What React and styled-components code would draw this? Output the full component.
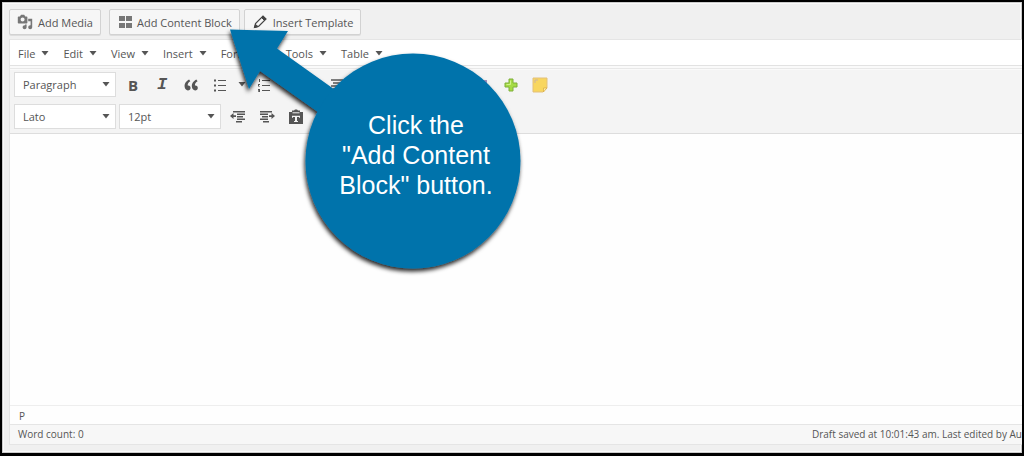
import React from "react";
import styled, { createGlobalStyle } from "styled-components";

const GlobalStyle = createGlobalStyle`
  * {
    box-sizing: border-box;
  }

  body {
    margin: 0;
    font-family: "Open Sans", "Noto Sans", sans-serif;
    font-size: 11px;
    color: #555;
  }

  button, select {
    font: inherit;
    color: inherit;
  }
`;

const Page = styled.main`
  position: relative;
  display: flex;
  flex-direction: column;
  min-height: 100vh;
  padding: 7px 0 8px 7px;
  overflow: hidden;
  background-color: #f0f0f0;
  border: 2px solid #000;
  border-bottom-width: 3px;
  box-shadow: inset 0 0 0 1px #ccc, inset 0 0 0 2px #fafafa;
`;

const MediaBar = styled.div`
  display: flex;
  gap: 4px;
  padding-bottom: 4px;
`;

const MediaButton = styled.button`
  display: flex;
  align-items: center;
  gap: ${(props) => props.$gap || 5}px;
  height: 26px;
  padding: 0 7px;
  margin-right: ${(props) => (props.$spaced ? "4px" : "0")};
  background-color: #f6f6f6;
  border: 1px solid #d2d2d2;
  border-radius: 2px;
  box-shadow: 0 1px 0 #ddd;
  white-space: nowrap;
  cursor: pointer;

  svg {
    color: #777;
  }
`;

const Editor = styled.section`
  flex: 1;
  display: flex;
  flex-direction: column;
  background-color: #fefefe;
  border-left: 1px solid #e5e5e5;
  border-top: 1px solid #e5e5e5;
`;

const MenuBar = styled.nav`
  display: flex;
  gap: 14px;
  height: 26px;
  padding: 1px 0 0 8px;
  background-color: #fff;
  border-bottom: 1px solid #e2e2e2;
`;

const MenuButton = styled.button`
  display: flex;
  align-items: center;
  gap: 6px;
  padding: 0;
  background: none;
  border: none;
  cursor: pointer;
`;

const Toolbar = styled.div`
  display: flex;
  flex-direction: column;
  gap: 7px;
  padding: 5px 4px 4px;
  background-color: #f4f4f4;
  border-top: 1px solid #fafafa;
  border-bottom: 1px solid #ddd;
  box-shadow: inset 0 1px 0 #fafafa, inset 0 2px 0 #e8e8e8, inset 0 3px 0 #fafafa;
`;

const ToolbarRow = styled.div`
  display: flex;
  align-items: center;
  gap: 1px;
  height: 25px;
`;

const SelectBox = styled.label`
  display: grid;
  align-items: center;
  width: 102px;
  height: 25px;
  margin-right: 2px;
  background-color: #fff;
  border: 1px solid #ddd;

  select, svg {
    grid-area: 1 / 1;
  }

  select {
    width: 100%;
    height: 23px;
    padding: 0 8px;
    appearance: none;
    background: none;
    border: none;
    outline: none;
  }

  svg {
    justify-self: end;
    margin-right: 5px;
    pointer-events: none;
  }
`;

const ToolButton = styled.button`
  display: flex;
  align-items: center;
  justify-content: center;
  width: ${(props) => (props.$narrow ? "14px" : "28px")};
  height: 25px;
  padding: 0;
  background: none;
  border: none;
  color: #555;
  cursor: pointer;
`;

const BoldMark = styled.b`
  font-size: 15px;
  line-height: 20px;
`;

const ItalicMark = styled.i`
  font-family: "Liberation Mono", monospace;
  font-size: 17px;
  font-weight: bold;
  line-height: 20px;
`;

const Content = styled.div`
  flex: 1;
  outline: none;
`;

const PathBar = styled.div`
  height: 19px;
  padding-left: 9px;
  border-top: 1px solid #eee;
  font-size: 10px;
  line-height: 20px;
`;

const StatusBar = styled.footer`
  display: flex;
  justify-content: space-between;
  height: 21px;
  padding-left: 8px;
  background-color: #f7f7f7;
  border-top: 1px solid #e5e5e5;
  border-bottom: 1px solid #e5e5e5;
  font-size: 10px;
  line-height: 18px;
  white-space: nowrap;
`;

const Callout = styled.aside`
  position: absolute;
  top: 17px;
  left: 218px;
  width: 320px;
  height: 270px;

  svg {
    display: block;
    overflow: visible;
  }
`;

const CalloutText = styled.p`
  position: absolute;
  top: 91px;
  left: 96px;
  width: 200px;
  margin: 0;
  color: #fff;
  font-family: "Liberation Sans", Arial, sans-serif;
  font-size: 25px;
  line-height: 30px;
  text-align: center;
`;

const Caret = () => (
  <svg width="8" height="5" viewBox="0 0 8 5" fill="#555" aria-hidden="true">
    <path d="M.5 0h7L4 4.500z" />
  </svg>
);

const MediaIcon = () => (
  <svg width="16" height="16" viewBox="0 0 20 20" fill="currentColor" aria-hidden="true">
    <path d="M13 11V4c0-.55-.45-1-1-1h-1.67L9 1H5L3.67 3H2c-.55 0-1 .45-1 1v7c0 .55.45 1 1 1h10c.55 0 1-.45 1-1zM7 4.5c1.38 0 2.5 1.12 2.5 2.5S8.38 9.5 7 9.5 4.5 8.38 4.5 7 5.62 4.5 7 4.5zM14 6h5v10.5c0 1.38-1.12 2.5-2.5 2.5S14 17.88 14 16.5s1.12-2.5 2.5-2.5c.17 0 .34.02.5.05V9h-3V6zm-4 8.05V13h2v3.5c0 1.38-1.12 2.5-2.5 2.5S7 17.88 7 16.5 8.12 14 9.5 14c.17 0 .34.02.5.05z" />
  </svg>
);

const BlocksIcon = () => (
  <svg width="16" height="16" viewBox="0 0 16 16" fill="currentColor" aria-hidden="true">
    <path d="M2 2h6v5H2zM9 2h6v5H9zM2 9h6v5H2zM9 9h6v5H9z" />
  </svg>
);

const PencilIcon = () => (
  <svg width="16" height="16" viewBox="0 0 16 16" fill="none" stroke="#444" aria-hidden="true">
    <path d="M2.500 13.500l1-4L11 2l3 3-7.500 7.500z" strokeWidth="1.200" />
    <path d="M9.500 3.500l3 3L14 5l-3-3z" fill="#444" />
    <path d="M2.500 13.500l1-3L6 12.500z" fill="#444" />
  </svg>
);

const QuoteIcon = () => (
  <svg width="18" height="18" viewBox="0 0 20 20" fill="currentColor" aria-hidden="true">
    <path d="M9.49 13.22c0-.74-.2-1.38-.61-1.9-.62-.78-1.83-.88-2.53-.72-.29-1.65 1.11-3.75 2.92-4.65L7.88 4c-2.73 1.3-5.42 4.28-4.96 8.05C3.21 14.43 4.59 16 6.54 16c.85 0 1.56-.25 2.12-.75s.83-1.18.83-2.03zm8.05 0c0-.74-.2-1.38-.61-1.9-.63-.78-1.83-.88-2.53-.72-.29-1.65 1.11-3.75 2.92-4.65L15.93 4c-2.73 1.3-5.41 4.28-4.95 8.05.29 2.38 1.66 3.95 3.61 3.95.85 0 1.56-.25 2.12-.75s.83-1.18.83-2.03z" />
  </svg>
);

const ListIcon = ({ numbered }) => (
  <svg width="14" height="14" viewBox="0 0 14 14" fill="currentColor" aria-hidden="true">
    <path d="M5 2h8v1H5zM5 7h8v1H5zM5 12h8v1H5z" />
    {numbered ? (
      <path d="M2 1h1v3H2zM1 6h2v1H2v1h1v.6H1zM1 11h2v3H1v-.7h1v-.5H1z" />
    ) : (
      <path d="M1 1.500h2v2H1zM1 6.500h2v2H1zM1 11.500h2v2H1z" />
    )}
  </svg>
);

const AlignIcon = ({ d }) => (
  <svg width="14" height="14" viewBox="0 0 14 14" stroke="currentColor" strokeWidth="1.500" aria-hidden="true">
    <path d={d} />
  </svg>
);

const DentIcon = ({ indent }) => (
  <svg width="16" height="16" viewBox="0 0 16 16" fill="currentColor" aria-hidden="true">
    <g transform={indent ? "translate(16 0) scale(-1 1)" : undefined}>
      <path d="M3 2h12v1.500H3zM7 4.500h8V6H7zM7 7h6v1.500H7zM7 9.500h8V11H7zM6 12h6v1.500H6z" />
      <path d="M0 7L3.500 4v2.200H6v1.700H3.500V10z" />
    </g>
  </svg>
);

const PasteIcon = () => (
  <svg width="16" height="16" viewBox="0 0 16 16" aria-hidden="true">
    <path d="M1 3h3V1.500h2L7 .5h2l1 1h2V3h3v12H1z" fill="#555" />
    <path d="M4.500 3.800h7" stroke="#f4f4f4" />
    <path d="M4 6.700h8v2H11v-.6H9v4h1v1H6v-1h1v-4H5v.6H4z" fill="#f4f4f4" />
  </svg>
);

const PlusIcon = () => (
  <svg width="16" height="16" viewBox="0 0 16 16" aria-hidden="true">
    <path d="M6 2h4v4h4v4h-4v4H6v-4H2V6h4z" fill="#a5db45" stroke="#7fb03a" strokeLinejoin="round" />
    <path d="M7.500 3.500v4h-4" stroke="#d0f28b" fill="none" />
  </svg>
);

const NoteIcon = () => (
  <svg width="16" height="16" viewBox="0 0 16 16" aria-hidden="true">
    <path d="M1 1h14v10l-4 4H1z" fill="#f8d65e" stroke="#e3c07a" />
    <path d="M15 11h-3.500v4z" fill="#fff0a3" stroke="#d8aa42" strokeWidth=".7" />
    <path d="M3 6V3h3" stroke="#cbb3a0" fill="none" />
  </svg>
);

const menus = ["File", "Edit", "View", "Insert", "Format", "Tools", "Table"];

const alignments = [
  ["Align left", "M1 2h12M1 5h8M1 8h12M1 11h8"],
  ["Align center", "M1 2h12M3 5h8M1 8h12M3 11h8"],
  ["Align right", "M1 2h12M5 5h8M1 8h12M5 11h8"],
  ["Justify", "M1 2h12M1 5h12M1 8h12M1 11h12"],
  ["Horizontal line", "M1 7h12"],
  ["Read more", "M1 3h12M1 7h3M6 7h3M11 7h2M1 11h12"],
];

const Dropdown = ({ label, value }) => (
  <SelectBox>
    <select aria-label={label} defaultValue={value}>
      <option>{value}</option>
    </select>
    <Caret />
  </SelectBox>
);

function App() {
  return (
    <>
      <GlobalStyle />
      <Page>
        <MediaBar>
          <MediaButton $spaced>
            <MediaIcon />
            Add Media
          </MediaButton>
          <MediaButton $gap={4}>
            <BlocksIcon />
            Add Content Block
          </MediaButton>
          <MediaButton>
            <PencilIcon />
            Insert Template
          </MediaButton>
        </MediaBar>

        <Editor>
          <MenuBar>
            {menus.map((menu) => (
              <MenuButton key={menu}>
                {menu}
                <Caret />
              </MenuButton>
            ))}
          </MenuBar>

          <Toolbar>
            <ToolbarRow>
              <Dropdown label="Block format" value="Paragraph" />
              <ToolButton aria-label="Bold"><BoldMark>B</BoldMark></ToolButton>
              <ToolButton aria-label="Italic"><ItalicMark>I</ItalicMark></ToolButton>
              <ToolButton aria-label="Blockquote"><QuoteIcon /></ToolButton>
              <ToolButton aria-label="Bulleted list"><ListIcon /></ToolButton>
              <ToolButton $narrow aria-label="Bulleted list styles"><Caret /></ToolButton>
              <ToolButton aria-label="Numbered list"><ListIcon numbered /></ToolButton>
              <ToolButton $narrow aria-label="Numbered list styles"><Caret /></ToolButton>
              {alignments.map(([name, d]) => (
                <ToolButton key={name} aria-label={name}><AlignIcon d={d} /></ToolButton>
              ))}
              <ToolButton aria-label="Insert shape">
                <svg width="14" height="14" viewBox="0 0 14 14" aria-hidden="true">
                  <path d="M2 2h10v10H2z" fill="#9d8fbd" />
                </svg>
              </ToolButton>
              <ToolButton aria-label="Add shortcode"><PlusIcon /></ToolButton>
              <ToolButton aria-label="Add note"><NoteIcon /></ToolButton>
            </ToolbarRow>
            <ToolbarRow>
              <Dropdown label="Font family" value="Lato" />
              <Dropdown label="Font size" value="12pt" />
              <ToolButton aria-label="Decrease indent"><DentIcon /></ToolButton>
              <ToolButton aria-label="Increase indent"><DentIcon indent /></ToolButton>
              <ToolButton aria-label="Paste as text"><PasteIcon /></ToolButton>
            </ToolbarRow>
          </Toolbar>

          <Content contentEditable suppressContentEditableWarning role="textbox" aria-label="Post content" />
          <PathBar>P</PathBar>
          <StatusBar>
            <span>Word count: 0</span>
            <span>Draft saved at 10:01:43 am. Last edited by Au</span>
          </StatusBar>
        </Editor>

        <Callout>
          <svg width="320" height="270" viewBox="220 19 320 270" aria-hidden="true">
            <defs>
              <filter id="shadow" x="-10%" y="-10%" width="120%" height="120%">
                <feDropShadow dx="-1" dy="3" stdDeviation="2" floodColor="#000" floodOpacity="0.85" />
              </filter>
            </defs>
            <g fill="#0273ab" filter="url(#shadow)">
              <path d="M230 29.500L288 31l-11 17.500L345 97l-20 20-65-46-11 18z" />
              <circle cx="413" cy="161" r="107.500" />
            </g>
          </svg>
          <CalloutText>
            Click the
            <br />
            "Add Content
            <br />
            Block" button.
          </CalloutText>
        </Callout>
      </Page>
    </>
  );
}

export default App;
